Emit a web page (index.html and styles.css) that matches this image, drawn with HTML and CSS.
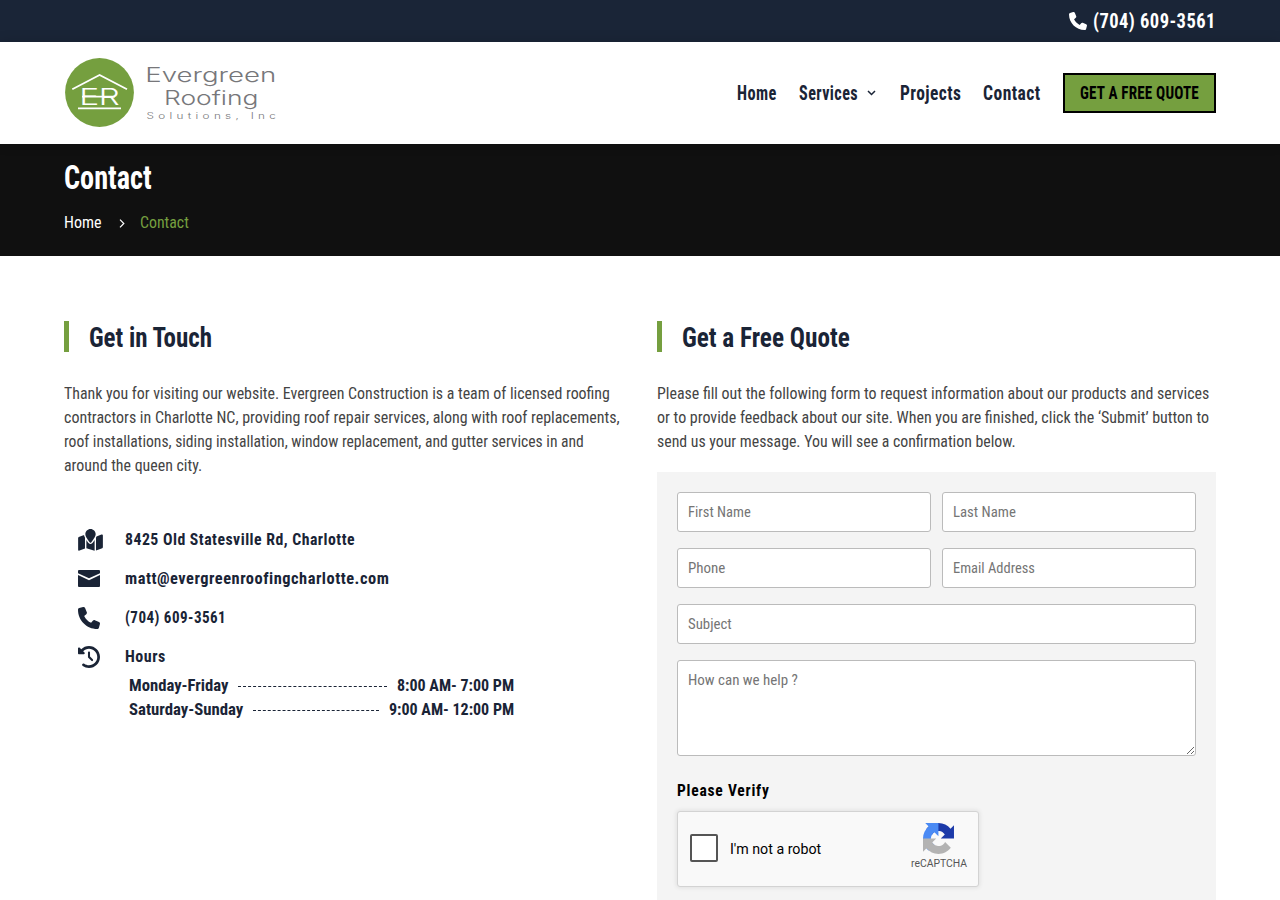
FILE: index.html
```html
<!DOCTYPE html>
<html lang="en">
<head>
<meta charset="utf-8">
<title>Contact - Evergreen Roofing Solutions, Inc</title>
<link rel="stylesheet" href="styles.css">
</head>
<body>
<svg class="defs" width="0" height="0">
  <symbol id="phone" viewBox="0 0 512 512"><path d="M164.9 24.6c-7.7-18.6-28-28.5-47.4-23.2l-88 24C12.1 30.2 0 46 0 64C0 311.4 200.6 512 448 512c18 0 33.8-12.1 38.6-29.5l24-88c5.3-19.4-4.6-39.7-23.2-47.4l-96-40c-16.3-6.8-35.2-2.1-46.3 11.6L304.7 368C234.3 334.7 177.3 277.7 144 207.3L193.3 167c13.7-11.2 18.4-30 11.6-46.3l-40-96z"/></symbol>
</svg>
<div class="topbar"><a class="call"><svg width="18" height="18" fill="#fff"><use href="#phone"/></svg><span class="fit display" data-width="123">(704) 609-3561</span></a></div>
<header class="header">
  <svg class="logo" width="212" height="72" viewBox="64 57 212 72">
    <circle cx="99.5" cy="92.5" r="34.4" fill="#759f3f"/>
    <g fill="none" stroke="#fff" stroke-width="1.8">
      <polyline points="72.3,89.3 99.6,75 127,89.3"/>
      <line x1="78" y1="108.3" x2="121" y2="108.3"/>
      <line x1="82" y1="96.6" x2="115" y2="96.6"/>
    </g>
    <g class="mark" fill="#fff">
      <text x="79.3" y="105" textLength="20" lengthAdjust="spacingAndGlyphs">E</text>
      <text x="98.8" y="105" textLength="21" lengthAdjust="spacingAndGlyphs">R</text>
    </g>
    <g class="wordmark" fill="#77777a">
      <text x="145.3" y="82" font-size="19.5" textLength="131" lengthAdjust="spacingAndGlyphs">Evergreen</text>
      <text x="164" y="105" font-size="19.5" textLength="94.5" lengthAdjust="spacingAndGlyphs">Roofing</text>
      <text class="small" transform="translate(146.5 119) scale(1.3 1)" textLength="99.5">Solutions, Inc</text>
    </g>
  </svg>
  <nav class="nav">
    <a><span class="fit display" data-width="40">Home</span></a>
    <a class="has-menu"><span class="fit display" data-width="59">Services</span><svg width="9" height="6" viewBox="0 0 9 6"><path d="M1 1l3.5 3.5L8 1" fill="none" stroke="#1a2436" stroke-width="1.5"/></svg></a>
    <a><span class="fit display" data-width="61">Projects</span></a>
    <a><span class="fit display" data-width="58">Contact</span></a>
    <a class="quote"><span class="fit display" data-width="119">GET A FREE QUOTE</span></a>
  </nav>
</header>
<section class="hero">
  <h1><span class="fit" data-width="88">Contact</span></h1>
  <div class="crumbs"><span class="fit" data-width="38">Home</span><svg width="6" height="9" viewBox="0 0 6 9"><path d="M1 .7l3.8 3.8L1 8.3" fill="none" stroke="#fff" stroke-width="1.2"/></svg><span class="fit here" data-width="48.5">Contact</span></div>
</section>
<main class="content">
  <section>
    <h2><span class="fit" data-width="123">Get in Touch</span></h2>
    <p><span class="fit" data-width="546">Thank you for visiting our website. Evergreen Construction is a team of licensed roofing</span>
    <span class="fit" data-width="556">contractors in Charlotte NC, providing roof repair services, along with roof replacements,</span>
    <span class="fit" data-width="520">roof installations, siding installation, window replacement, and gutter services in and</span>
    <span class="fit" data-width="138">around the queen city.</span></p>
    <ul class="info">
      <li><svg width="25" height="22" viewBox="0 0 576 512"><path d="M408 120c0 54.6-73.1 151.9-105.2 192c-7.7 9.6-22 9.6-29.6 0C241.1 271.9 168 174.6 168 120C168 53.7 221.7 0 288 0s120 53.7 120 120zm8 80.4c3.5-6.9 6.7-13.8 9.6-20.6c.5-1.2 1-2.5 1.5-3.7l116-46.4C558.9 123.4 576 135 576 152V422.8c0 9.8-6 18.6-15.1 22.3L416 503V200.4zM137.6 138.3c2.4 14.1 7.2 28.3 12.8 41.5c2.9 6.8 6.1 13.7 9.6 20.6V451.8L32.9 502.7C17.1 509 0 497.4 0 480.4V209.6c0-9.8 6-18.6 15.1-22.3l122.6-49zM327.8 332c13.9-17.4 35.7-45.7 56.2-77V504.3L192 449.4V255c20.5 31.3 42.3 59.6 56.2 77c20.5 25.6 59.1 25.6 79.6 0z"/></svg><span class="fit" data-width="230.5">8425 Old Statesville Rd, Charlotte</span></li>
      <li><svg width="22" height="17" viewBox="0 0 22 17"><path d="M1 0h20a1 1 0 0 1 1 1v2.2L11 8.3 0 3.2V1a1 1 0 0 1 1-1zM0 5l11 5.2L22 5v11a1 1 0 0 1-1 1H1a1 1 0 0 1-1-1z"/></svg><span class="fit" data-width="264.5">matt@evergreenroofingcharlotte.com</span></li>
      <li><svg width="22" height="22"><use href="#phone"/></svg><span class="fit" data-width="101.5">(704) 609-3561</span></li>
      <li><svg width="22" height="22" viewBox="0 0 512 512"><path d="M75 75L41 41C25.9 25.9 0 36.6 0 57.9V168c0 13.3 10.7 24 24 24H134.1c21.4 0 32.1-25.9 17-41l-30.8-30.8C155 85.5 203 64 256 64c106 0 192 86 192 192s-86 192-192 192c-40.8 0-78.6-12.7-109.7-34.4c-14.5-10.1-34.4-6.6-44.6 7.9s-6.6 34.4 7.9 44.6C151.2 495 201.7 512 256 512c141.4 0 256-114.6 256-256S397.4 0 256 0C185.3 0 121.3 28.7 75 75zm181 53c-13.3 0-24 10.7-24 24V256c0 6.4 2.5 12.5 7 17l72 72c9.4 9.4 24.6 9.4 33.9 0s9.4-24.6 0-33.9l-65-65V152c0-13.3-10.7-24-24-24z"/></svg><span class="fit" data-width="41">Hours</span></li>
    </ul>
    <div class="hours">
      <div class="row"><span class="fit" data-width="99">Monday-Friday</span><i></i><span class="fit" data-width="117">8:00 AM- 7:00 PM</span></div>
      <div class="row"><span class="fit" data-width="114">Saturday-Sunday</span><i></i><span class="fit" data-width="125">9:00 AM- 12:00 PM</span></div>
    </div>
  </section>
  <section>
    <h2><span class="fit" data-width="167.5">Get a Free Quote</span></h2>
    <p><span class="fit" data-width="552.5">Please fill out the following form to request information about our products and services</span>
    <span class="fit" data-width="552.5">or to provide feedback about our site. When you are finished, click the ‘Submit’ button to</span>
    <span class="fit" data-width="359">send us your message. You will see a confirmation below.</span></p>
    <form class="form">
      <label class="field"><input><span class="fit" data-width="63">First Name</span></label>
      <label class="field"><input><span class="fit" data-width="63">Last Name</span></label>
      <label class="field"><input><span class="fit" data-width="37">Phone</span></label>
      <label class="field"><input><span class="fit" data-width="82">Email Address</span></label>
      <label class="field wide"><input><span class="fit" data-width="43.5">Subject</span></label>
      <label class="field wide tall"><textarea></textarea><span class="fit" data-width="110">How can we help ?</span></label>
      <div class="verify wide"><span class="fit" data-width="93">Please Verify</span></div>
      <div class="captcha wide">
        <span class="box"></span>
        <span class="fit robot" data-width="91.5">I'm not a robot</span>
        <div class="brand">
          <svg width="31" height="31" viewBox="0 0 64 64"><path fill="#1c3aa9" d="M64 31.955l-.033-1.37V4.687l-7.16 7.16C50.948 4.674 42.033.093 32.05.093c-10.4 0-19.622 4.96-25.458 12.64l11.736 11.86a15.55 15.55 0 0 1 4.754-5.334c2.05-1.6 4.952-2.906 8.968-2.906.485 0 .86.057 1.135.163 4.976.393 9.288 3.14 11.828 7.124l-8.307 8.307L64 31.953"/><path fill="#4a8af4" d="M31.862.094l-1.37.033H4.594l7.16 7.16C4.58 13.147 0 22.06 0 32.046c0 10.4 4.96 19.622 12.64 25.458L24.5 45.768a15.55 15.55 0 0 1-5.334-4.754c-1.6-2.05-2.906-4.952-2.906-8.968 0-.485.057-.86.163-1.135.393-4.976 3.14-9.288 7.124-11.828l8.307 8.307L31.86.095"/><path fill="#b3b3b3" d="M.001 32.045l.033 1.37v25.898l7.16-7.16c5.86 7.173 14.774 11.754 24.76 11.754 10.4 0 19.622-4.96 25.458-12.64l-11.736-11.86a15.55 15.55 0 0 1-4.754 5.334c-2.05 1.6-4.952 2.906-8.968 2.906-.485 0-.86-.057-1.135-.163-4.976-.393-9.288-3.14-11.828-7.124l8.307-8.307c-10.522.04-22.4.066-27.295-.005"/></svg>
          <span class="fit" data-width="56">reCAPTCHA</span>
        </div>
      </div>
    </form>
  </section>
</main>
<script src="fit.js"></script>
</body>
</html>
```
FILE: styles.css
```css
* { box-sizing: border-box; }
body {
  margin: 0;
  background: #fff;
  color: #444;
  font: 16px/24px "Roboto Condensed", Roboto, sans-serif;
  font-stretch: 75%;
}
.defs { display: none; }
.fit { display: inline-block; white-space: nowrap; vertical-align: top; }
.fit b { display: inline-block; font-weight: inherit; transform-origin: 0 50%; }
.display { font-size: 20px; font-weight: 700; letter-spacing: .5px; }

.topbar { height: 42px; padding: 0 64px; background: #1a2537; display: flex; justify-content: flex-end; align-items: center; }
.call { display: flex; gap: 6px; align-items: center; color: #fff; }

.header { position: relative; height: 102px; padding: 0 64px; background: #fff; display: flex; justify-content: space-between; align-items: center; box-shadow: 0 0 12px rgba(0, 0, 0, .15); }
.wordmark { font-family: Inter, sans-serif; font-weight: 350; font-stretch: 100%; }
.wordmark .small { font-size: 9px; }
.mark { font-family: Inter, sans-serif; font-weight: 300; font-size: 22.5px; }
.nav { display: flex; align-items: center; gap: 22px; color: #1a2436; }
.has-menu { display: flex; align-items: center; gap: 9px; padding-right: 2px; }
.quote { width: 153px; height: 40px; padding: 6px 0 0 15px; border: 2px solid #000; background: #759f3f; color: #000; }
.quote .display { font-size: 19px; letter-spacing: .2px; }

.hero { height: 112px; padding: 12px 64px 0; background: #101010; color: #fff; }
.hero h1 { margin: 0; font-size: 34px; line-height: 42px; font-weight: 700; }
.crumbs { display: flex; align-items: center; margin-top: 13px; }
.crumbs svg { margin: 1px 15px 0 17px; }
.here { color: #759f3f; }

.content { display: grid; grid-template-columns: 1fr 1fr; gap: 34px; padding: 65px 64px 0; }
h2 { margin: 0; height: 31px; padding-left: 20px; border-left: 5px solid #759f3f; font-size: 28px; line-height: 33px; font-weight: 700; color: #1a2436; }
p { margin: 30px 0 0; display: flex; flex-direction: column; }
.info { list-style: none; margin: 42px 0 0; padding: 0 0 0 14px; color: #1a2436; font-weight: 700; letter-spacing: .5px; }
.info li { display: grid; grid-template-columns: 47px 1fr; align-items: center; height: 39px; }
.info svg { fill: #1a2436; }
.hours { margin: -2px 0 0 65px; width: 385px; color: #1a2436; font-weight: 700; }
.row { display: flex; align-items: center; }
.row i { flex: 1; margin: 1px 10px 0; border-top: 1px dashed #1a2436; }

.form { display: grid; grid-template-columns: 1fr 1fr; gap: 16px 11px; margin-top: 18px; padding: 20px; background: #f4f4f4; height: 428px; align-content: start; }
.field { display: grid; height: 40px; }
.field > * { grid-area: 1 / 1; }
.field input, .field textarea { width: 100%; height: 100%; margin: 0; border: 1px solid #bbb; border-radius: 3px; background: #fff; }
.field span { margin: 8px 0 0 11px; z-index: 1; font-size: 15px; color: #757575; pointer-events: none; }
.wide { grid-column: 1 / -1; }
.tall { height: 96px; }
.verify { margin-top: 7px; color: #000; font-weight: 700; letter-spacing: .8px; height: 24px; }
.captcha { margin-top: -8px; width: 302px; height: 76px; margin-bottom: -10px; padding: 0 11px 0 12px; display: flex; align-items: center; border: 1px solid #d3d3d3; border-radius: 3px; background: #f9f9f9; box-shadow: 0 0 4px 1px rgba(0, 0, 0, .08); font-family: Roboto, sans-serif; font-stretch: 100%; }
.box { width: 28px; height: 28px; margin-top: -2px; border: 2px solid #555; border-radius: 2px; background: #fff; }
.robot { margin-left: 12px; font-size: 14px; color: #000; }
.brand { margin-left: auto; display: flex; flex-direction: column; align-items: center; font-size: 10px; line-height: 12px; color: #555; gap: 4px; margin-top: -5px; }
.brand svg { margin-right: 1px; }
```
FILE: fit.js
```js
// Condenses each label horizontally to its set width.
document.querySelectorAll('.fit').forEach(function (el) {
  var b = document.createElement('b');
  while (el.firstChild) b.appendChild(el.firstChild);
  el.appendChild(b);
  var w = Number(el.dataset.width);
  var natural = b.offsetWidth;
  el.style.width = w + 'px';
  b.style.transform = 'scaleX(' + (w / natural) + ')';
});
```
